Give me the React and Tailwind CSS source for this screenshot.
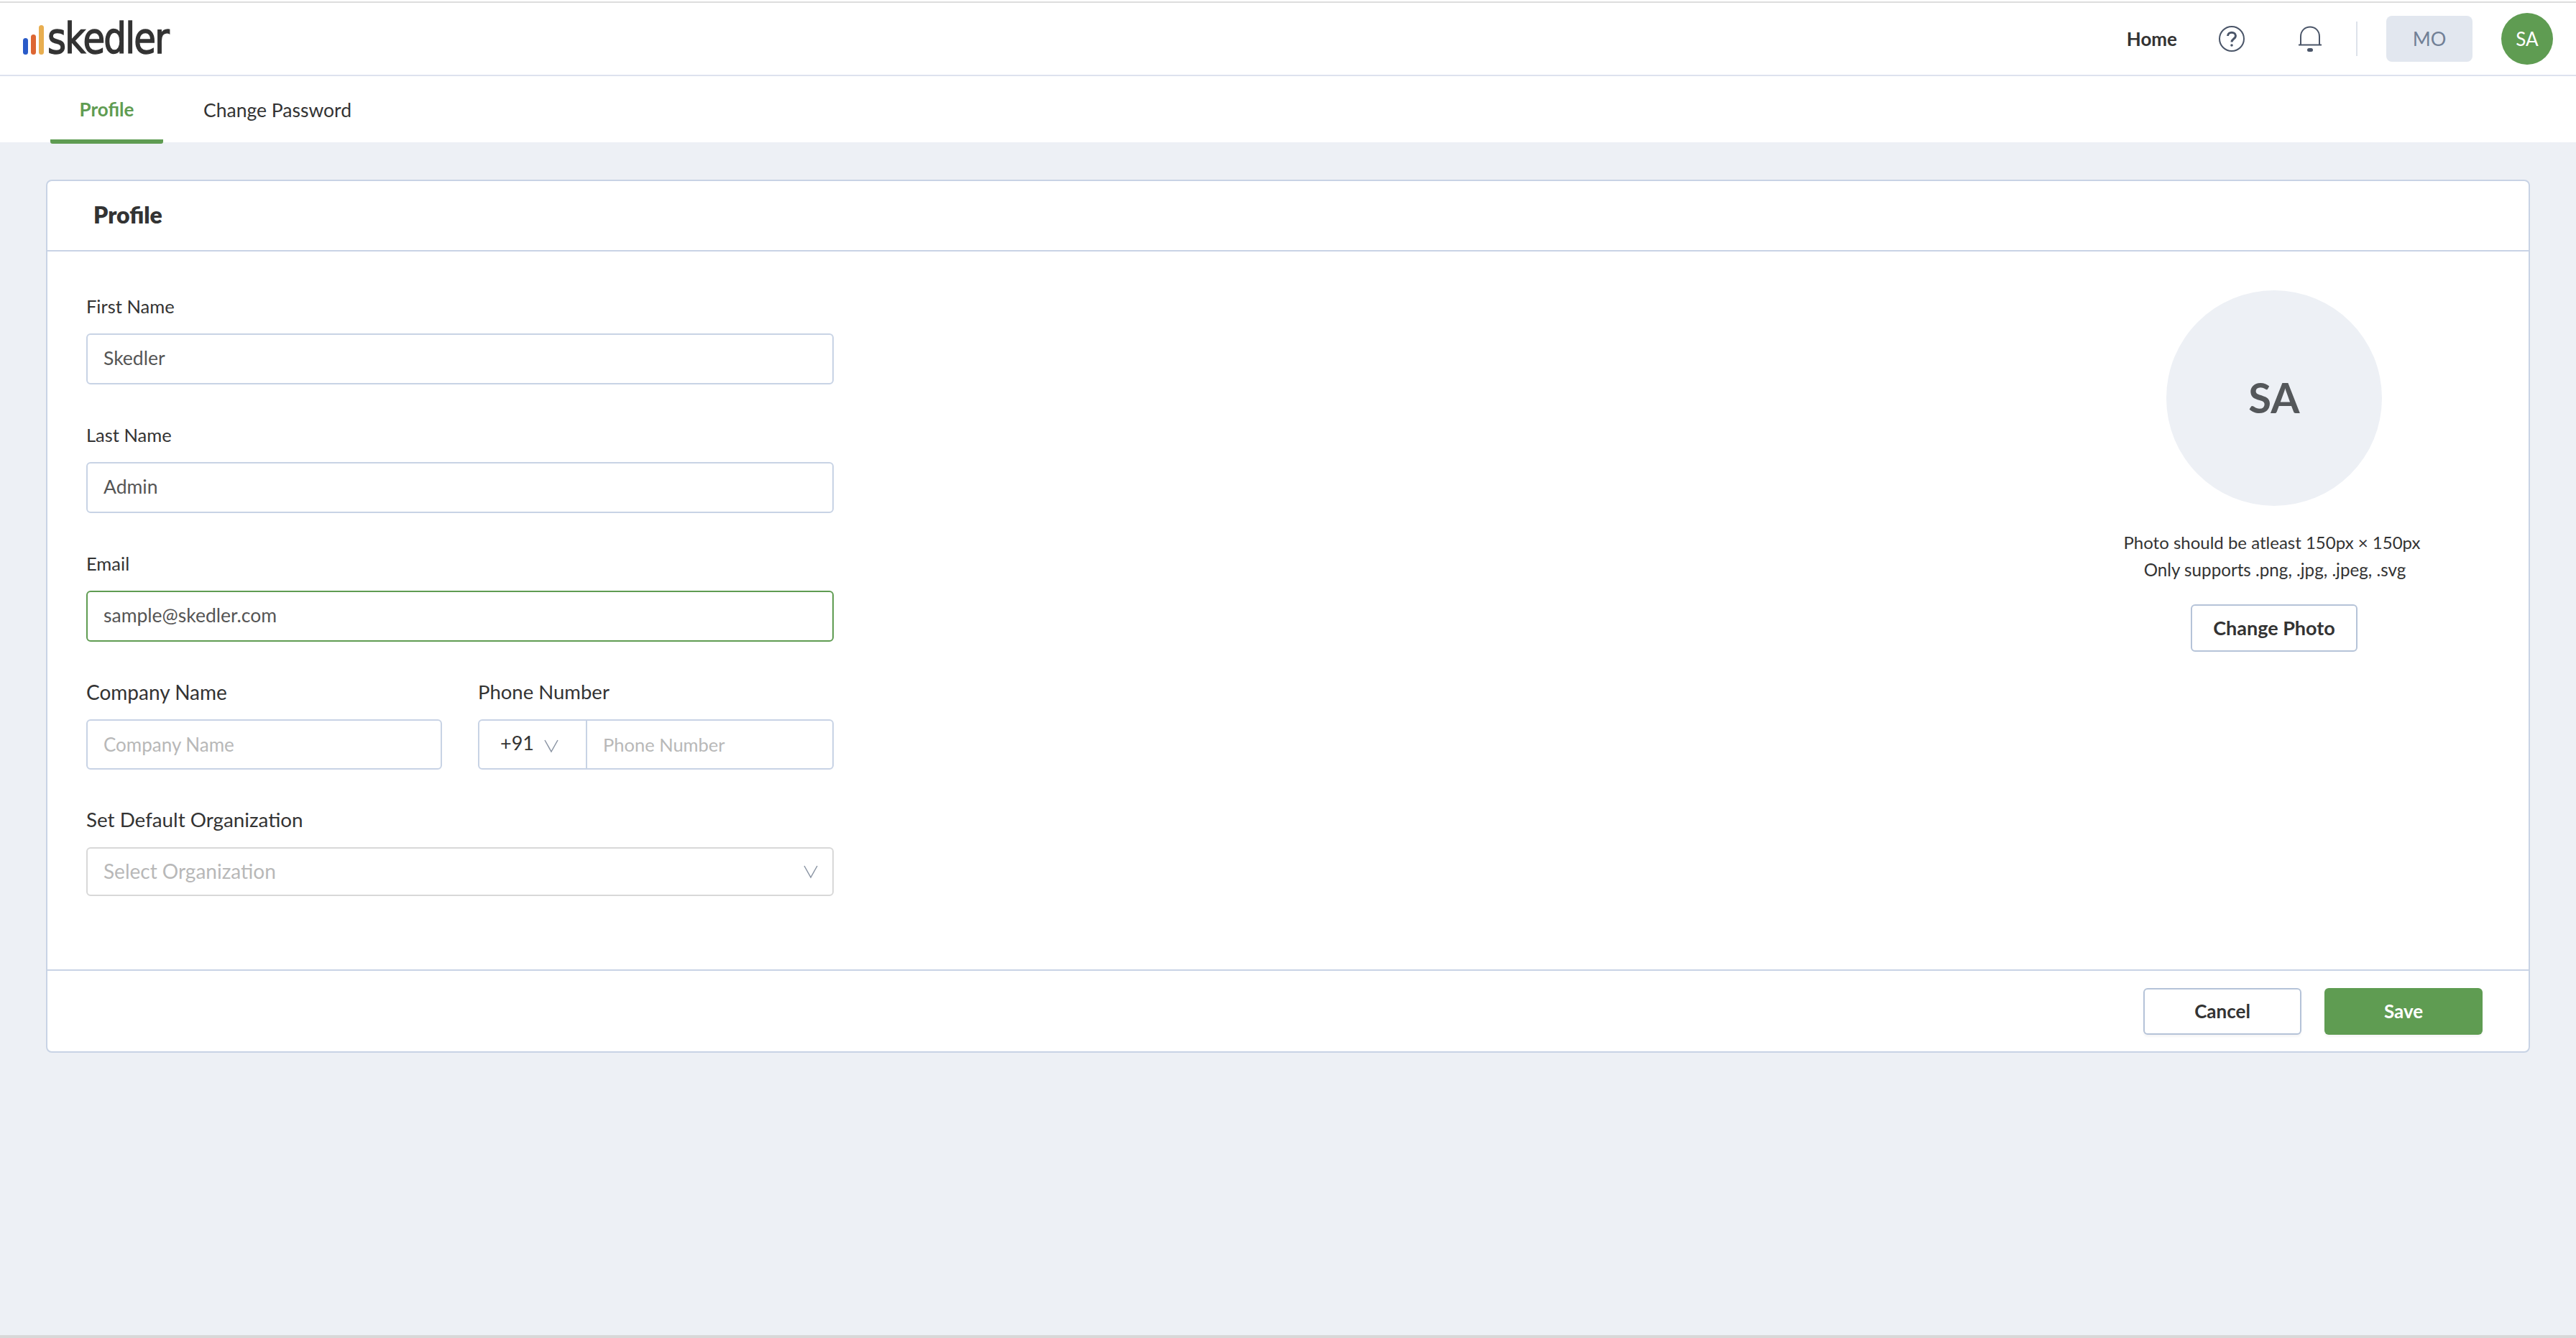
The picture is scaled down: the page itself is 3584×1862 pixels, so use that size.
import React from 'react';

const font = "font-['Lato','Open_Sans',sans-serif]";

const Chevron = ({ className }) => (
  <svg viewBox="0 0 20 20" className={className} fill="none" stroke="#8a94a3" strokeWidth="1.5">
    <path d="M1 2 L10 18 L19 2" />
  </svg>
);

const HelpIcon = () => (
  <svg viewBox="0 0 36 36" className="w-9 h-9" fill="none" stroke="#4a5568">
    <circle cx="18" cy="18" r="17" strokeWidth="2" />
    <path d="M12.5 14 C12.5 7.5 23.5 7.5 23.5 14 C23.5 18 18 18 18 22.5" strokeWidth="3" />
    <circle cx="18" cy="27" r="1.8" fill="#4a5568" stroke="none" />
  </svg>
);

const BellIcon = () => (
  <svg viewBox="0 0 32 36" className="w-8 h-9" fill="none" stroke="#4a5568" strokeWidth="2">
    <path d="M3 26 V15 C3 -3 29 -3 29 15 V26" />
    <path d="M0 26.5 H32" />
    <rect x="12" y="31" width="8" height="5" rx="2.5" fill="#4a5568" stroke="none" />
  </svg>
);

const Logo = () => (
  <div className="flex items-end gap-[4px] h-[44px]">
    <div className="flex items-end gap-[4px] h-[41px]">
      <span className="w-[7px] h-[23px] rounded-full bg-[#2a5bc8]" />
      <span className="w-[7px] h-[28px] rounded-full bg-[#dd6633]" />
      <span className="w-[7px] h-[41px] rounded-full bg-[#e8ae50]" />
    </div>
    <span className="font-['DejaVu_Sans',sans-serif] text-[58px] leading-[44px] tracking-[-2.1px] text-[#333] h-[44px] ml-[1px] scale-x-[0.86] origin-left [-webkit-text-stroke:1.5px_#333]">skedler</span>
  </div>
);

const Field = ({ label, value, active }) => (
  <div className="flex flex-col">
    <label className="text-[25.5px] leading-[30px] text-[#333] mb-[23px]">{label}</label>
    <div className={`h-[71px] rounded-[6px] border-2 flex items-center px-[22px] pb-[2px] text-[26.5px] text-[#555] ${active ? 'border-[#5f9c52]' : 'border-[#c8d3e5]'}`}>
      {value}
    </div>
  </div>
);

export default function App() {
  return (
    <div className={`${font} w-[3584px] h-[1862px] flex flex-col bg-[#edf0f5] overflow-hidden`}>
      {/* Top nav */}
      <div className="bg-white pt-[2px] shrink-0">
        <header className="h-[104px] border-t-2 border-b-2 border-t-[#dddddd] border-b-[#dde2ee] flex items-center justify-between pl-[32px] pr-[32px] box-border">
          <Logo />
          <div className="flex items-center">
            <span className="text-[26px] font-bold text-[#333] mr-[58px]">Home</span>
            <HelpIcon />
            <div className="w-[75px]" />
            <BellIcon />
            <div className="w-[2px] h-[48px] bg-[#dde2ea] mx-[48px]" />
            <div className="w-[120px] h-[64px] rounded-[8px] bg-[#e2e7ef] flex items-center justify-center text-[27px] text-[#718096] -ml-[8px]">MO</div>
            <div className="w-[72px] h-[72px] rounded-full bg-[#5f9c52] flex items-center justify-center text-[26px] text-white ml-[40px]">SA</div>
          </div>
        </header>
      </div>

      {/* Tabs */}
      <nav className="h-[92px] bg-white flex pl-[70px] shrink-0">
        <div className="w-[157px] h-[94px] border-b-[6px] border-[#5f9c52] rounded-b-[3px] flex items-center justify-center pt-[5px] text-[26px] font-bold text-[#5f9c52]">Profile</div>
        <div className="flex items-center ml-[56px] pt-[3px] text-[26.5px] text-[#333]">Change Password</div>
      </nav>

      {/* Card */}
      <main className="flex-1 px-[64px] pt-[52px]">
        <section className="bg-white border-2 border-[#c8d3e5] rounded-[8px] h-[1215px] flex flex-col">
          <div className="h-[94px] border-b-2 border-[#c8d3e5] flex items-center pl-[65px] pb-[2px] shrink-0 box-content">
            <h1 className="text-[32px] font-extrabold text-[#333] -ml-[1px]">Profile</h1>
          </div>

          <div className="flex-1 flex justify-between pl-[54px] pr-[54px] pt-[54px]">
            <div className="w-[1040px] pt-[7px] flex flex-col gap-[55px]">
              <Field label="First Name" value="Skedler" />
              <Field label="Last Name" value="Admin" />
              <Field label="Email" value="sample@skedler.com" active />

              <div className="flex justify-between">
                <div className="flex flex-col w-[495px]">
                  <label className="text-[28px] leading-[30px] text-[#333] mb-[23px]">Company Name</label>
                  <div className="h-[70px] rounded-[6px] border-2 border-[#c8d3e5] flex items-center px-[22px] text-[26px] text-[#b8b8b8]">Company Name</div>
                </div>
                <div className="flex flex-col w-[495px]">
                  <label className="text-[27.5px] leading-[30px] text-[#333] mb-[23px]">Phone Number</label>
                  <div className="h-[70px] rounded-[6px] border-2 border-[#c8d3e5] flex items-center">
                    <div className="w-[150px] h-full border-r-2 border-[#c8d3e5] flex items-center pl-[29px] text-[27px] text-[#333]">
                      <span className="-mt-[4px]">+91</span>
                      <Chevron className="w-[20px] h-[20px] ml-[14px] mt-[4px]" />
                    </div>
                    <span className="pl-[22px] text-[25.5px] text-[#b8b8b8]">Phone Number</span>
                  </div>
                </div>
              </div>

              <div className="flex flex-col">
                <label className="text-[27.8px] leading-[30px] text-[#333] mb-[23px]">Set Default Organization</label>
                <div className="h-[68px] rounded-[6px] border-2 border-[#d8d8d8] flex items-center justify-between pl-[22px] pr-[20px] pb-[2px] text-[28px] text-[#b8b8b8]">
                  Select Organization
                  <Chevron className="w-[20px] h-[20px] mt-[2px]" />
                </div>
              </div>
            </div>

            <div className="w-[600px] flex flex-col items-center">
              <div className="w-[300px] h-[300px] rounded-full bg-[#edf0f5] flex items-center justify-center pb-[4px] text-[58px] font-bold text-[#54575a]">SA</div>
              <p className="mt-[31px] text-[24px] leading-[39px] text-[#333] -ml-[6px]">Photo should be atleast 150px × 150px</p>
              <p className="text-[24.2px] leading-[39px] text-[#333] -mt-[1px] ml-[2px]">Only supports .png, .jpg, .jpeg, .svg</p>
              <button className="mt-[29px] w-[232px] h-[66px] rounded-[6px] border-2 border-[#b5c3d8] bg-white text-[27px] font-bold text-[#333]">Change Photo</button>
            </div>
          </div>

          <div className="h-[114px] border-t-2 border-[#c8d3e5] flex items-center justify-end gap-[32px] pr-[64px] shrink-0">
            <button className="w-[220px] h-[65px] rounded-[6px] border-2 border-[#b5c3d8] bg-white text-[26px] font-bold text-[#333] shadow-[0_3px_3px_rgba(0,0,0,0.04)]">Cancel</button>
            <button className="w-[220px] h-[65px] rounded-[6px] bg-[#5f9c52] text-[26px] font-bold text-white shadow-[0_3px_3px_rgba(0,0,0,0.04)]">Save</button>
          </div>
        </section>
      </main>

      <div className="h-[4px] bg-[#d8d8d8] shrink-0" />
    </div>
  );
}
